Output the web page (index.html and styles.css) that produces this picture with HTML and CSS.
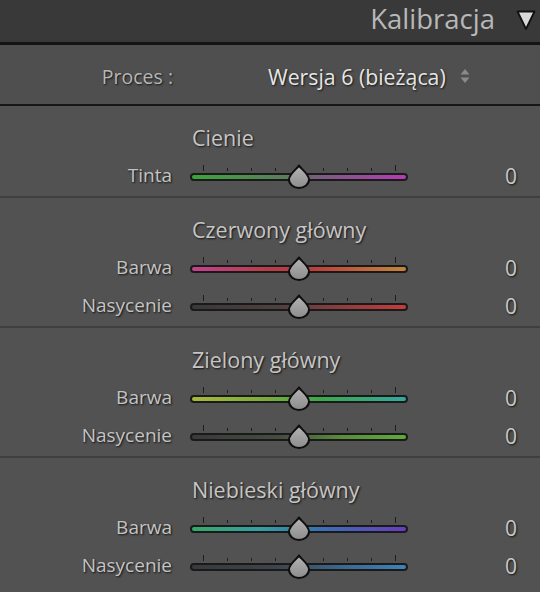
FILE: index.html
```html
<!DOCTYPE html>
<html lang="pl">
<head>
<meta charset="utf-8">
<title>Kalibracja</title>
<link rel="stylesheet" href="styles.css">
</head>
<body>
<div class="panel">
  <header class="head">
    <span class="head-title">Kalibracja</span>
    <svg class="head-tri" width="20" height="22" viewBox="0 0 20 22"><path d="M1.5 2.5 L18.5 2.5 L10 20 Z" fill="#d8d8d8" stroke="#111" stroke-width="1.8" stroke-linejoin="round"/></svg>
  </header>

  <div class="proces">
    <span class="proces-label">Proces :</span>
    <span class="proces-value">Wersja 6 (bieżąca)</span>
    <svg class="updown" width="10" height="16" viewBox="0 0 10 16"><path d="M5 1 L9.5 6.5 L0.5 6.5 Z" fill="#8a8a8a"/><path d="M5 15 L9.5 9.5 L0.5 9.5 Z" fill="#8a8a8a"/></svg>
  </div>

  <section class="sec">
    <div class="sec-title">Cienie</div>
    <div class="row">
      <span class="lbl">Tinta</span>
      <div class="slider">
        <div class="ticks"><i class="big"></i><i></i><i></i><i></i><i class="big"></i><i></i><i></i><i></i><i class="big"></i></div>
        <div class="track g-tinta"></div>
        <svg class="thumb" width="24" height="25" viewBox="0 0 24 25"><defs><linearGradient id="tg" x1="0" y1="0" x2="0" y2="1"><stop offset="0" stop-color="#b4b4b4"/><stop offset="1" stop-color="#8c8c8c"/></linearGradient></defs><path d="M12 1.5 C13.5 4.5 22 10 22 15.5 A10 8.5 0 0 1 2 15.5 C2 10 10.5 4.5 12 1.5 Z" fill="url(#tg)" stroke="#0e0e0e" stroke-width="2" stroke-linejoin="round"/></svg>
      </div>
      <span class="val">0</span>
    </div>
  </section>

  <section class="sec">
    <div class="sec-title">Czerwony główny</div>
    <div class="row">
      <span class="lbl">Barwa</span>
      <div class="slider">
        <div class="ticks"><i class="big"></i><i></i><i></i><i></i><i class="big"></i><i></i><i></i><i></i><i class="big"></i></div>
        <div class="track g-red-hue"></div>
        <svg class="thumb" width="24" height="25" viewBox="0 0 24 25"><path d="M12 1.5 C13.5 4.5 22 10 22 15.5 A10 8.5 0 0 1 2 15.5 C2 10 10.5 4.5 12 1.5 Z" fill="url(#tg)" stroke="#0e0e0e" stroke-width="2" stroke-linejoin="round"/></svg>
      </div>
      <span class="val">0</span>
    </div>
    <div class="row">
      <span class="lbl">Nasycenie</span>
      <div class="slider">
        <div class="ticks"><i class="big"></i><i></i><i></i><i></i><i class="big"></i><i></i><i></i><i></i><i class="big"></i></div>
        <div class="track g-red-sat"></div>
        <svg class="thumb" width="24" height="25" viewBox="0 0 24 25"><path d="M12 1.5 C13.5 4.5 22 10 22 15.5 A10 8.5 0 0 1 2 15.5 C2 10 10.5 4.5 12 1.5 Z" fill="url(#tg)" stroke="#0e0e0e" stroke-width="2" stroke-linejoin="round"/></svg>
      </div>
      <span class="val">0</span>
    </div>
  </section>

  <section class="sec">
    <div class="sec-title">Zielony główny</div>
    <div class="row">
      <span class="lbl">Barwa</span>
      <div class="slider">
        <div class="ticks"><i class="big"></i><i></i><i></i><i></i><i class="big"></i><i></i><i></i><i></i><i class="big"></i></div>
        <div class="track g-green-hue"></div>
        <svg class="thumb" width="24" height="25" viewBox="0 0 24 25"><path d="M12 1.5 C13.5 4.5 22 10 22 15.5 A10 8.5 0 0 1 2 15.5 C2 10 10.5 4.5 12 1.5 Z" fill="url(#tg)" stroke="#0e0e0e" stroke-width="2" stroke-linejoin="round"/></svg>
      </div>
      <span class="val">0</span>
    </div>
    <div class="row">
      <span class="lbl">Nasycenie</span>
      <div class="slider">
        <div class="ticks"><i class="big"></i><i></i><i></i><i></i><i class="big"></i><i></i><i></i><i></i><i class="big"></i></div>
        <div class="track g-green-sat"></div>
        <svg class="thumb" width="24" height="25" viewBox="0 0 24 25"><path d="M12 1.5 C13.5 4.5 22 10 22 15.5 A10 8.5 0 0 1 2 15.5 C2 10 10.5 4.5 12 1.5 Z" fill="url(#tg)" stroke="#0e0e0e" stroke-width="2" stroke-linejoin="round"/></svg>
      </div>
      <span class="val">0</span>
    </div>
  </section>

  <section class="sec last">
    <div class="sec-title">Niebieski główny</div>
    <div class="row">
      <span class="lbl">Barwa</span>
      <div class="slider">
        <div class="ticks"><i class="big"></i><i></i><i></i><i></i><i class="big"></i><i></i><i></i><i></i><i class="big"></i></div>
        <div class="track g-blue-hue"></div>
        <svg class="thumb" width="24" height="25" viewBox="0 0 24 25"><path d="M12 1.5 C13.5 4.5 22 10 22 15.5 A10 8.5 0 0 1 2 15.5 C2 10 10.5 4.5 12 1.5 Z" fill="url(#tg)" stroke="#0e0e0e" stroke-width="2" stroke-linejoin="round"/></svg>
      </div>
      <span class="val">0</span>
    </div>
    <div class="row">
      <span class="lbl">Nasycenie</span>
      <div class="slider">
        <div class="ticks"><i class="big"></i><i></i><i></i><i></i><i class="big"></i><i></i><i></i><i></i><i class="big"></i></div>
        <div class="track g-blue-sat"></div>
        <svg class="thumb" width="24" height="25" viewBox="0 0 24 25"><path d="M12 1.5 C13.5 4.5 22 10 22 15.5 A10 8.5 0 0 1 2 15.5 C2 10 10.5 4.5 12 1.5 Z" fill="url(#tg)" stroke="#0e0e0e" stroke-width="2" stroke-linejoin="round"/></svg>
      </div>
      <span class="val">0</span>
    </div>
  </section>
</div>
</body>
</html>
```

FILE: styles.css
```css
* { box-sizing: border-box; }

html, body {
  margin: 0;
  padding: 0;
  background: #525252;
}

body {
  font-family: "Open Sans", "Noto Sans", sans-serif;
  color: #bdbdbd;
  width: 540px;
  height: 592px;
  overflow: hidden;
}

.panel {
  width: 540px;
}

/* header */
.head {
  height: 45px;
  background: #393939;
  border-bottom: 3px solid #141414;
  display: flex;
  align-items: center;
  justify-content: flex-end;
  padding-right: 4px;
  gap: 21px;
}

.head-title {
  font-size: 27.5px;
  color: #b8b8b8;
  line-height: 1;
  margin-top: -4px;
}

.head-tri {
  display: block;
  margin-top: -3px;
}

/* proces row */
.proces {
  height: 61px;
  border-bottom: 2px solid #161616;
  background: #4f4f4f;
  display: flex;
  align-items: center;
  padding-top: 4px;
}

.proces-label {
  width: 173px;
  text-align: right;
  font-size: 19.5px;
  color: #b6b6b6;
  text-shadow: 1px 1px 2px rgba(0, 0, 0, 0.75);
}

.proces-value {
  margin-left: 95px;
  font-size: 21.3px;
  color: #e6e6e6;
  text-shadow: 1px 1px 2px rgba(0, 0, 0, 0.75);
}

.updown {
  display: block;
  margin-left: 14px;
  margin-top: -2px;
}

/* sections */
.sec {
  border-bottom: 2px solid #3f3f3f;
  padding-top: 20px;
}

.sec.last {
  border-bottom: 0;
}

.sec-title {
  height: 24px;
  line-height: 24px;
  padding-left: 192px;
  font-size: 21.5px;
  color: #c6c6c6;
  text-shadow: 1px 1px 2px rgba(0, 0, 0, 0.8);
  margin-bottom: 8px;
}

.row {
  height: 38px;
  display: grid;
  grid-template-columns: 172px 218px 1fr;
  column-gap: 18px;
  align-items: center;
}

.lbl {
  text-align: right;
  font-size: 19px;
  color: #c4c4c4;
  text-shadow: 1px 1px 2px rgba(0, 0, 0, 0.8);
  margin-top: -4px;
}

.val {
  text-align: right;
  padding-right: 23px;
  font-size: 21px;
  color: #c8c8c8;
  text-shadow: 1px 1px 2px rgba(0, 0, 0, 0.8);
  margin-top: -2px;
}

/* slider */
.slider {
  position: relative;
  height: 38px;
  padding-top: 7px;
  display: flex;
  flex-direction: column;
}

.ticks {
  height: 6px;
  margin-bottom: 2px;
  padding: 0 12px 0 13px;
  display: flex;
  justify-content: space-between;
  align-items: flex-end;
}

.ticks i {
  display: block;
  width: 1px;
  height: 3px;
  background: #1e1e1e;
}

.ticks i.big {
  height: 6px;
}

.track {
  height: 8px;
  border: 2px solid #1a1a1a;
  border-radius: 4px;
}

.thumb {
  position: absolute;
  left: 97px;
  top: 6px;
  display: block;
}

.g-tinta { background: linear-gradient(90deg, #3aa63a 0%, #5e7a5e 45%, #74607a 55%, #b43cb4 100%); }
.g-red-hue { background: linear-gradient(90deg, #c2428e 0%, #b83c48 35%, #bc3c3c 55%, #c4863a 100%); }
.g-red-sat { background: linear-gradient(90deg, #3a3838 0%, #4e4040 40%, #903c3c 70%, #c43c3c 100%); }
.g-green-hue { background: linear-gradient(90deg, #a8b83a 0%, #78ac3c 35%, #3ca84c 60%, #34a8a0 100%); }
.g-green-sat { background: linear-gradient(90deg, #3a3a3a 0%, #444c40 40%, #5a8c3c 70%, #5cac3a 100%); }
.g-blue-hue { background: linear-gradient(90deg, #36a866 0%, #34a0a0 30%, #3a70b4 60%, #6a3cc0 100%); }
.g-blue-sat { background: linear-gradient(90deg, #383a3c 0%, #3e444c 40%, #3a6890 70%, #3c82ba 100%); }
```
